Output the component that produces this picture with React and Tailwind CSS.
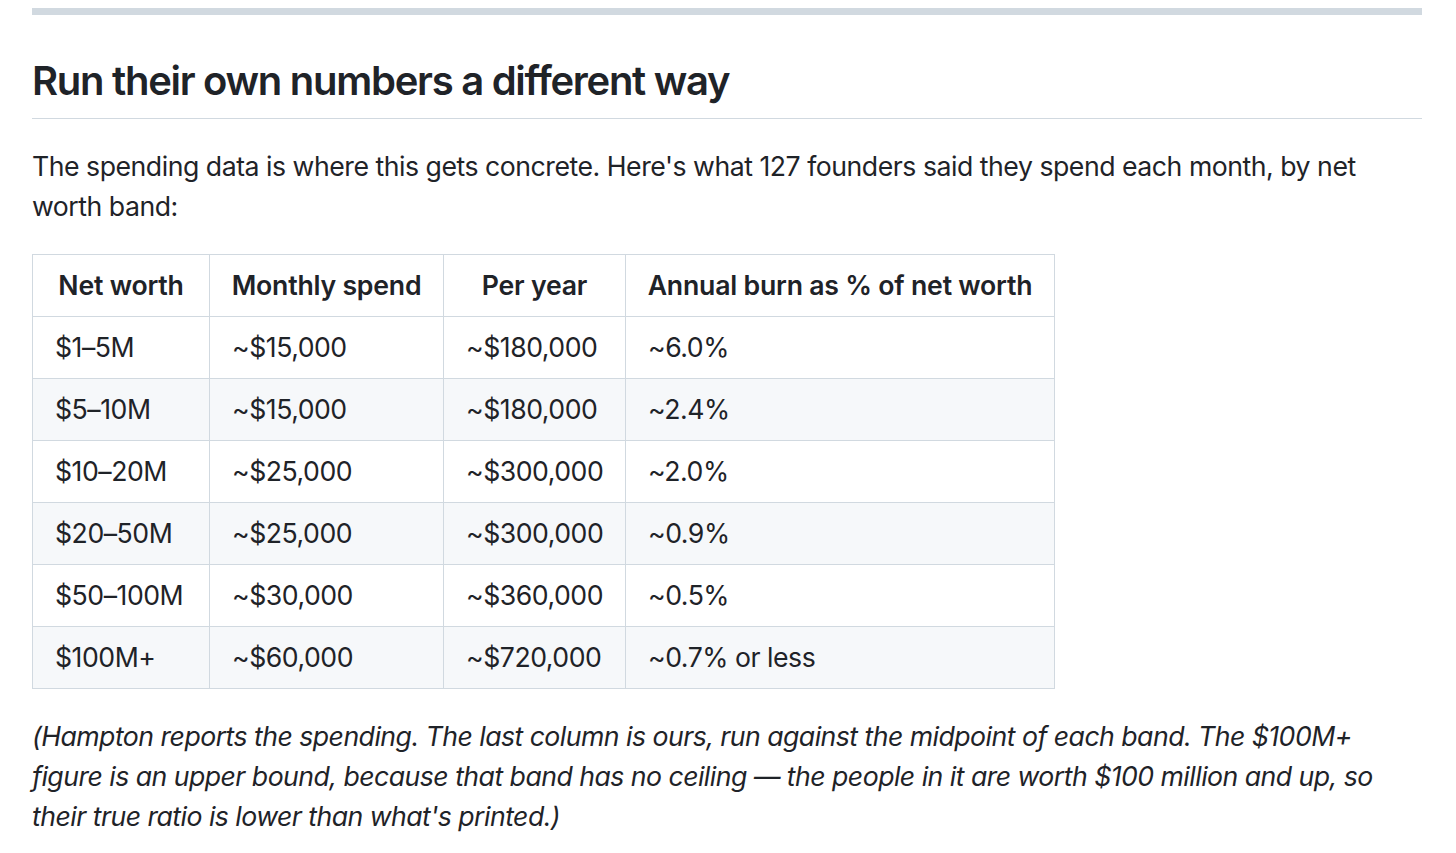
const rows = [
  ["$1–5M", "~$15,000", "~$180,000", "~6.0%"],
  ["$5–10M", "~$15,000", "~$180,000", "~2.4%"],
  ["$10–20M", "~$25,000", "~$300,000", "~2.0%"],
  ["$20–50M", "~$25,000", "~$300,000", "~0.9%"],
  ["$50–100M", "~$30,000", "~$360,000", "~0.5%"],
  ["$100M+", "~$60,000", "~$720,000", "~0.7% or less"],
];

const headers = ["Net worth", "Monthly spend", "Per year", "Annual burn as % of net worth"];

export default function App() {
  return (
    <div
      className="min-h-screen bg-white text-[#1f2328] pl-[32px] pr-[34px] pt-[8px]"
      style={{ fontFamily: "Inter, 'Noto Sans', sans-serif" }}
    >
      <div className="h-[6.5px] bg-[#d1d9e0]" />

      {/* Section heading */}
      <h2 className="mt-[41px] pb-[12px] border-b border-[#d1d9e0] text-[40px] leading-[50px] font-semibold tracking-[-0.032em]">
        Run their own numbers a different way
      </h2>

      <p className="mt-[27px] text-[26.67px] leading-[40px] tracking-[-0.018em]">
        The spending data is where this gets concrete. Here's what 127 founders said they spend each month, by net worth band:
      </p>

      {/* Spending table */}
      <table className="mt-[28px] border-collapse text-[26.67px] leading-[40px] tracking-[-0.018em] table-fixed w-[1022px]">
        <colgroup>
          <col className="w-[177px]" />
          <col className="w-[234px]" />
          <col className="w-[182px]" />
          <col className="w-[429px]" />
        </colgroup>
        <thead>
          <tr className="bg-white">
            {headers.map((h) => (
              <th
                key={h}
                className="border border-[#d1d9e0] px-[21px] py-[10px] h-[62px] font-semibold text-center whitespace-nowrap tracking-[-0.008em]"
              >
                {h}
              </th>
            ))}
          </tr>
        </thead>
        <tbody>
          {rows.map((r, i) => (
            <tr key={r[0]} className={i % 2 === 1 ? "bg-[#f6f8fa]" : "bg-white"}>
              {r.map((c, j) => (
                <td
                  key={j}
                  className="border border-[#d1d9e0] px-[22px] py-[10px] h-[62px] whitespace-nowrap"
                >
                  {c}
                </td>
              ))}
            </tr>
          ))}
        </tbody>
      </table>

      <p className="mt-[27px] text-[26.67px] leading-[40px] italic tracking-[-0.02em]">
        (Hampton reports the spending. The last column is ours, run against the midpoint of each band. The $100M+ figure is an upper bound, because that band has no ceiling — the people in it are worth $100 million and up, so their true ratio is lower than what's printed.)
      </p>
    </div>
  );
}
